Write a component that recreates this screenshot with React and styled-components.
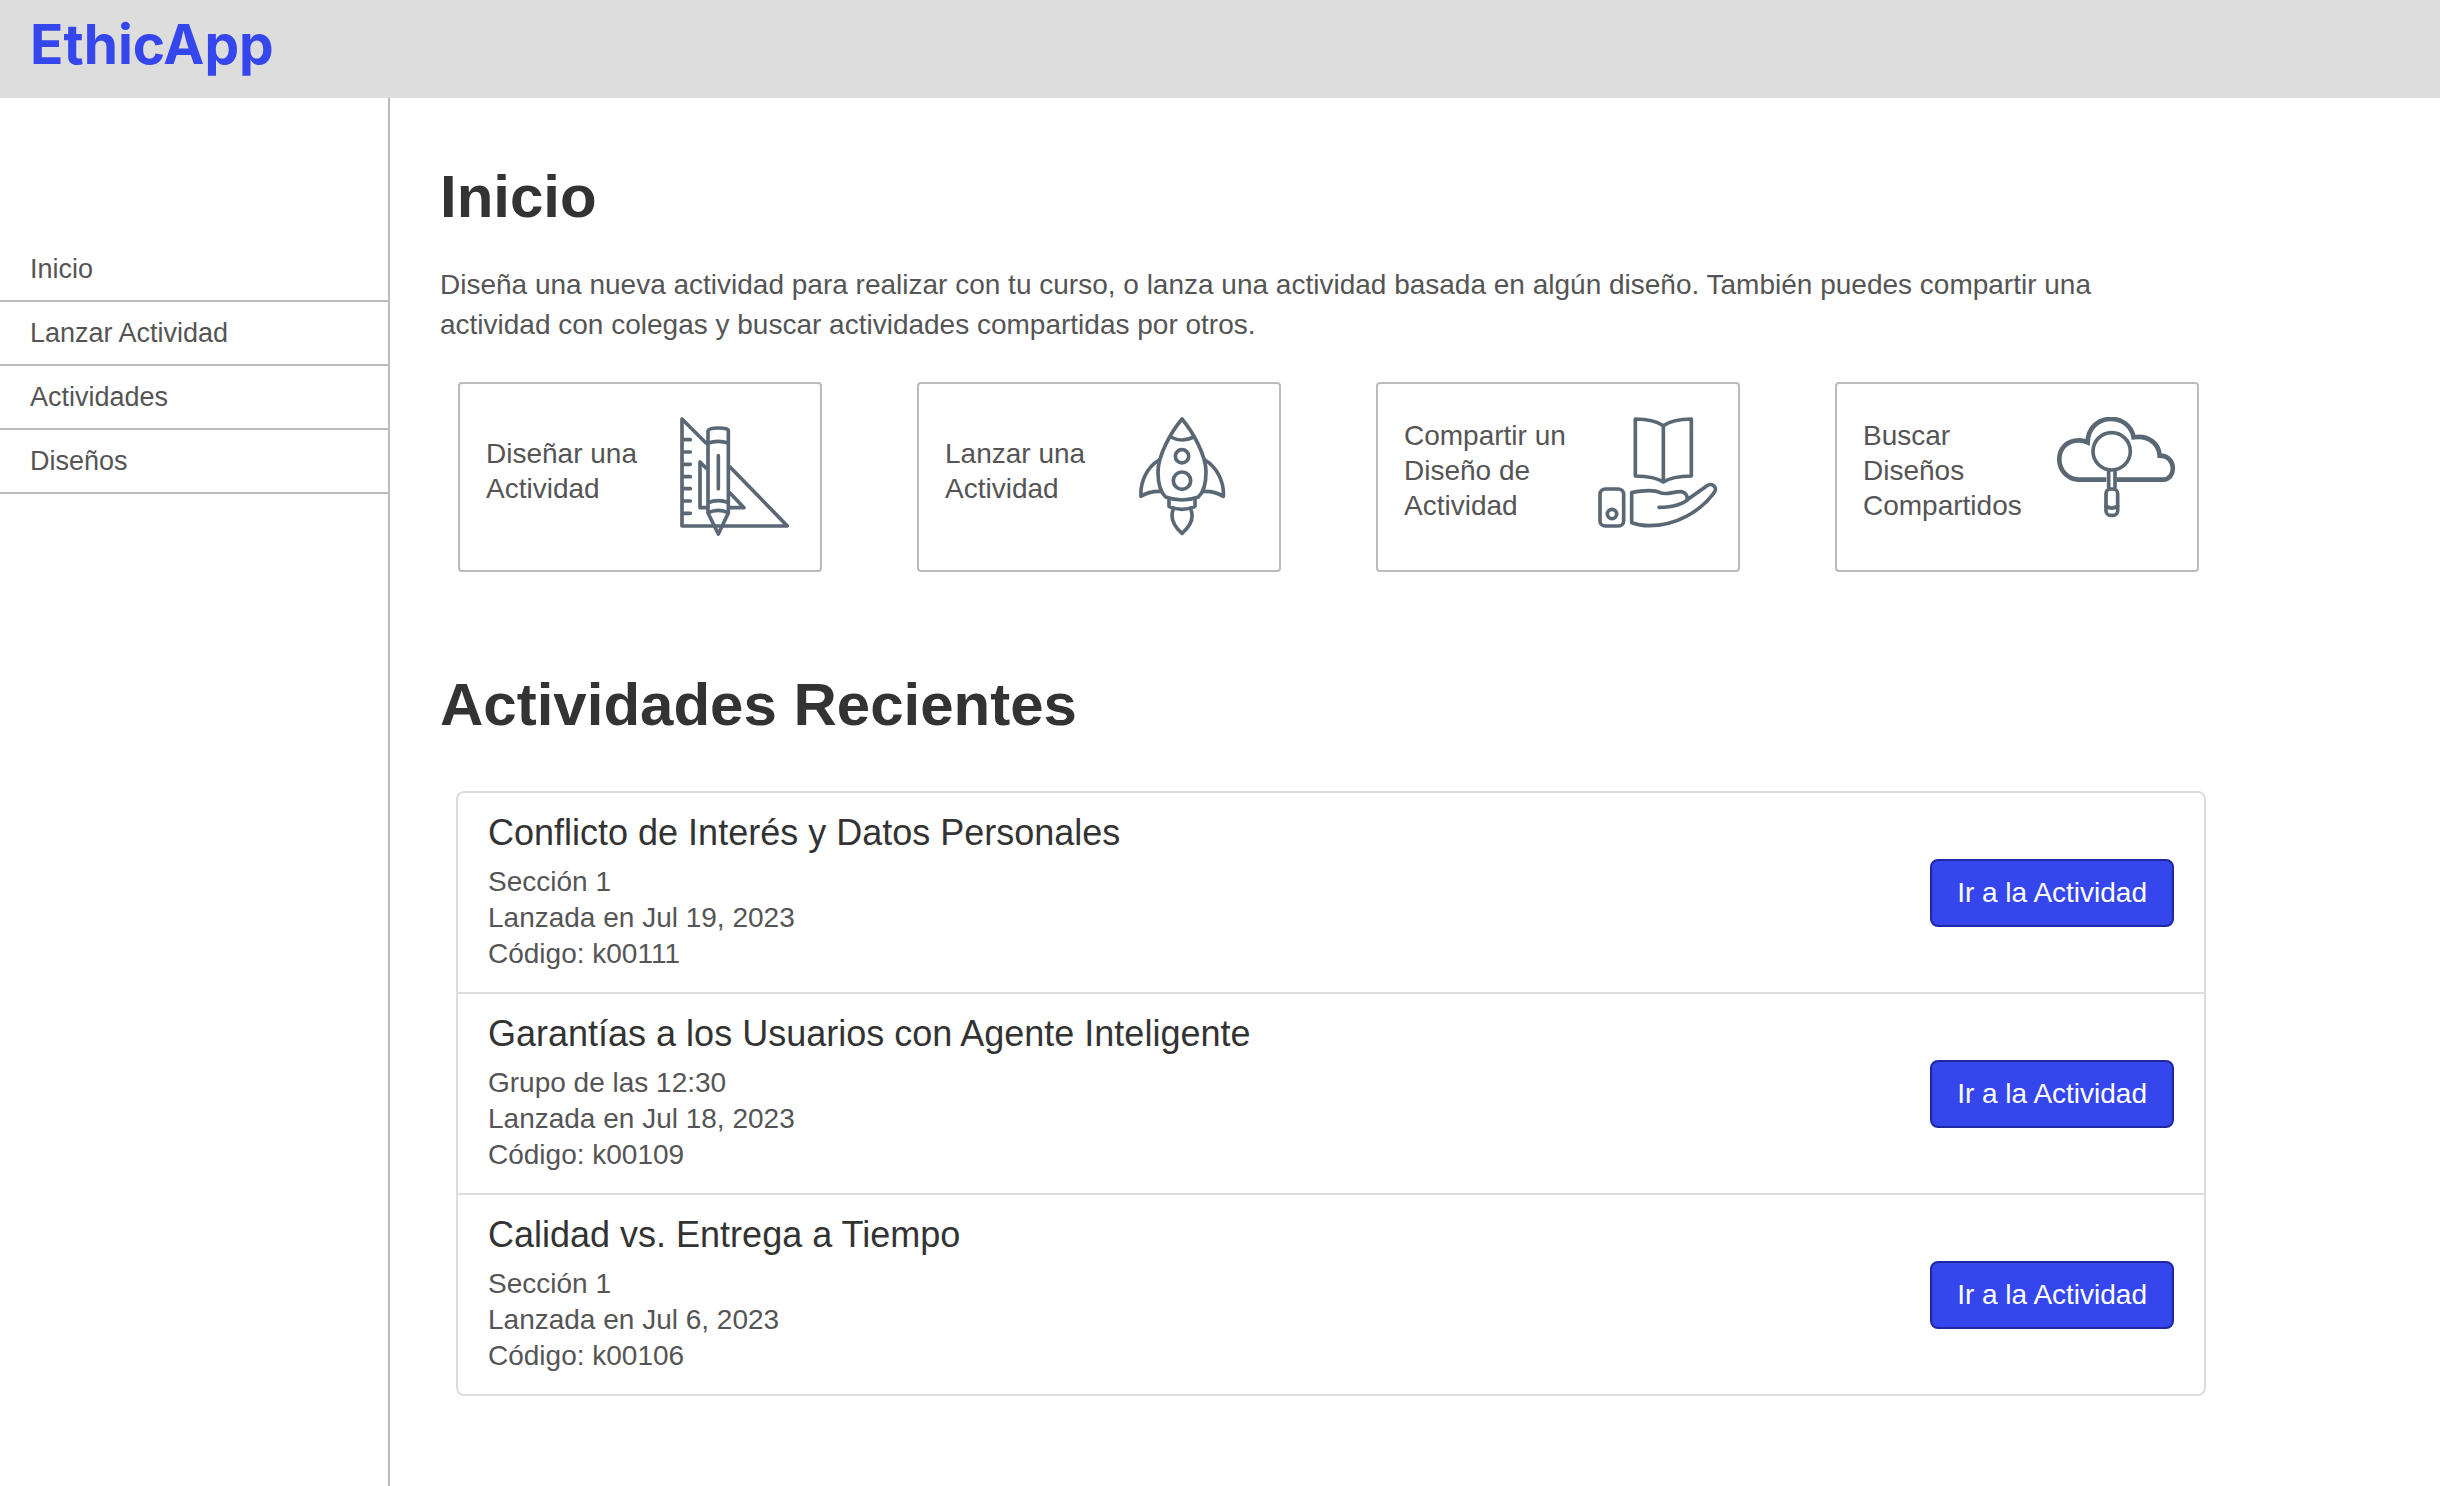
import React from "react";
import styled, { createGlobalStyle } from "styled-components";

const GlobalStyle = createGlobalStyle`
  *, *::before, *::after { box-sizing: border-box; }
  body {
    margin: 0;
    background: #fff;
    color: #555;
    font-family: "Liberation Sans", Arial, Helvetica, sans-serif;
    font-size: 28px;
    line-height: 40px;
  }
  h1, h2, h3, p, ul { margin: 0; padding: 0; }
  ul { list-style: none; }
  a { color: inherit; text-decoration: none; }
`;

const Page = styled.div`
  display: flex;
  flex-direction: column;
  min-height: 100vh;
`;

const Header = styled.header`
  height: 98px;
  padding: 8px 30px;
  background: #ddd;
`;

const Brand = styled.a`
  display: inline-block;
  color: #3546ec;
  font-family: Inter, "Liberation Sans", sans-serif;
  font-size: 55px;
  font-weight: 700;
  line-height: 72px;
`;

const Body = styled.div`
  display: flex;
  flex: 1;
`;

const Sidebar = styled.nav`
  flex: 0 0 390px;
  padding-top: 140px;
  border-right: 2px solid #bbb;
`;

const NavLink = styled.a`
  display: block;
  padding: 11px 30px;
  border-bottom: 2px solid #bbb;
  font-size: 27px;
`;

const Main = styled.main`
  flex: 1;
  min-width: 0;
  padding: 66px 234px 66px 50px;
`;

const Heading = styled.h1`
  color: #333;
  font-size: 60px;
  font-weight: 700;
  line-height: 66px;
`;

const Intro = styled.p`
  margin-top: 35px;
`;

const Cards = styled.div`
  display: grid;
  grid-template-columns: repeat(4, 1fr);
  gap: 95px;
  margin: 37px 7px 100px 18px;
`;

const Card = styled.a`
  display: flex;
  align-items: center;
  justify-content: space-between;
  height: 190px;
  padding: 0 20px 0 26px;
  border: 2px solid #bbb;
  border-radius: 4px;
  line-height: 35px;
`;

const CardLabel = styled.span`
  flex: 0 0 170px;
  margin-bottom: 13px;
`;

const Icon = styled.svg`
  flex: none;
  width: 120px;
  height: 120px;
  fill: none;
  stroke: #5a6875;
  stroke-width: 11;
  stroke-linecap: round;
  stroke-linejoin: round;
`;

const CloudOutline = styled.path`
  stroke-width: 14;
  stroke-linecap: butt;
  stroke-linejoin: miter;
`;

const ActivityList = styled.ul`
  margin: 53px 0 0 16px;
  border: 2px solid #ddd;
  border-radius: 8px;
`;

const Activity = styled.li`
  display: flex;
  align-items: center;
  justify-content: space-between;
  height: 201px;
  padding: 0 30px;
  border-bottom: 2px solid #ddd;
  line-height: 36px;

  &:last-child {
    height: 199px;
    border-bottom: 0;
  }
`;

const ActivityTitle = styled.h3`
  margin-bottom: 11px;
  color: #333;
  font-size: 36px;
  font-weight: 400;
  line-height: 40px;
`;

const GoButton = styled.button`
  height: 68px;
  padding: 0 25px;
  border: 2px solid #1f289f;
  border-radius: 8px;
  background: #3546ec;
  color: #fff;
  font: inherit;
  cursor: pointer;
`;

const DesignIcon = () => (
  <Icon viewBox="0 0 360 360" aria-hidden="true">
    <path d="M78 78 6 6V327H322L150 150M6 68H31M6 105H31M6 142H31M6 179H31M6 215H31M6 252H31M6 289H31" />
    <path d="M78 153 60 135V272H78M151 272H192L150 228" />
    <path d="M84 288V42Q84 33 115 33T145 42V288L115 351ZM84 78Q115 68 145 78M84 257Q115 245 145 257M84 287Q115 273 145 287M115 116V215" />
  </Icon>
);

const RocketIcon = () => (
  <Icon viewBox="0 0 360 360" aria-hidden="true">
    <path d="M129 6C97 44 57 114 57 165C57 197 65 226 80 240Q104 249 129 249T178 240C193 226 201 197 201 165C201 114 161 44 129 6Z" />
    <path d="M95 60Q129 78 164 60" />
    <circle cx="129" cy="118" r="20" />
    <circle cx="129" cy="191" r="26" />
    <path d="M60 129C25 150 3 194 6 238Q30 222 64 223M198 129C233 150 256 194 253 238Q228 222 194 223" />
    <path d="M90 246V268Q108 277 129 277T168 268V246M102 278C94 303 102 326 129 349C156 326 165 303 156 278" />
  </Icon>
);

const ShareIcon = () => (
  <Icon viewBox="0 0 360 360" aria-hidden="true">
    <path d="M112 6V177Q170 178 196 195Q222 178 280 177V6Q222 7 196 26Q170 7 112 6ZM196 26V195" />
    <rect x="6" y="216" width="71" height="111" rx="16" />
    <circle cx="42" cy="291" r="14" />
    <path d="M183 271C222 271 254 264 275 243L323 209C343 191 361 214 347 229C305 284 235 326 153 326Q125 326 101 317V227C132 221 168 218 186 227C203 235 227 224 247 224C262 224 271 238 266 250" />
  </Icon>
);

const SearchIcon = () => (
  <Icon viewBox="0 0 360 360" aria-hidden="true">
    <CloudOutline d="M148 188H64C-11 183-14 70 66 70Q79 70 92 76C94-14 217-16 230 61C271 53 306 78 308 116C360 115 358 188 318 188H179" />
    <circle cx="164" cy="103" r="56" />
    <path d="M155 163V211M174 163V211" />
    <rect x="147" y="216" width="35" height="79" rx="14" />
    <path d="M147 267Q164 280 182 267" />
  </Icon>
);

const sections = ["Inicio", "Lanzar Actividad", "Actividades", "Diseños"];

const shortcuts = [
  { label: "Diseñar una Actividad", Picture: DesignIcon },
  { label: "Lanzar una Actividad", Picture: RocketIcon },
  { label: "Compartir un Diseño de Actividad", Picture: ShareIcon },
  { label: "Buscar Diseños Compartidos", Picture: SearchIcon },
];

const activities = [
  { title: "Conflicto de Interés y Datos Personales", group: "Sección 1", date: "Jul 19, 2023", code: "k00111" },
  { title: "Garantías a los Usuarios con Agente Inteligente", group: "Grupo de las 12:30", date: "Jul 18, 2023", code: "k00109" },
  { title: "Calidad vs. Entrega a Tiempo", group: "Sección 1", date: "Jul 6, 2023", code: "k00106" },
];

export default function App() {
  return (
    <Page>
      <GlobalStyle />
      <Header>
        <Brand href="#">EthicApp</Brand>
      </Header>
      <Body>
        <Sidebar>
          <ul>
            {sections.map((name) => (
              <li key={name}>
                <NavLink href="#">{name}</NavLink>
              </li>
            ))}
          </ul>
        </Sidebar>
        <Main>
          <Heading>Inicio</Heading>
          <Intro>
            Diseña una nueva actividad para realizar con tu curso, o lanza una actividad basada en
            algún diseño. También puedes compartir una actividad con colegas y buscar actividades
            compartidas por otros.
          </Intro>
          <Cards>
            {shortcuts.map(({ label, Picture }) => (
              <Card key={label} href="#">
                <CardLabel>{label}</CardLabel>
                <Picture />
              </Card>
            ))}
          </Cards>
          <Heading as="h2">Actividades Recientes</Heading>
          <ActivityList>
            {activities.map(({ title, group, date, code }) => (
              <Activity key={code}>
                <div>
                  <ActivityTitle>{title}</ActivityTitle>
                  <p>{group}</p>
                  <p>Lanzada en {date}</p>
                  <p>Código: {code}</p>
                </div>
                <GoButton type="button">Ir a la Actividad</GoButton>
              </Activity>
            ))}
          </ActivityList>
        </Main>
      </Body>
    </Page>
  );
}
